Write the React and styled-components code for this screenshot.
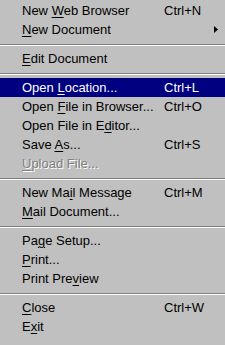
import React from "react";
import styled, { createGlobalStyle } from "styled-components";

const GlobalStyle = createGlobalStyle`
  html, body {
    margin: 0;
    padding: 0;
    background: #c0c0c0;
  }
  body {
    font-family: "Liberation Sans", Arial, sans-serif;
  }
`;

const Menu = styled.div`
  width: 225px;
  height: 345px;
  box-sizing: border-box;
  padding-top: 1px;
  background: #c0c0c0;
  display: flex;
  flex-direction: column;
  font-size: 13px;
  color: #000;
  overflow: hidden;
`;

const Row = styled.div`
  height: 19px;
  line-height: 19px;
  display: grid;
  grid-template-columns: 142px 1fr 12px;
  padding-left: 22px;
  white-space: nowrap;
  background: ${props => (props.$active ? "#000080" : "transparent")};
  color: ${props =>
    props.$disabled ? "#808080" : props.$active ? "#ffffff" : "#000000"};
  text-shadow: ${props => (props.$disabled ? "1px 1px 0 #ffffff" : "none")};
`;

const Label = styled.span``;

const Shortcut = styled.span``;

const ArrowCell = styled.span`
  display: flex;
  align-items: center;
  justify-content: flex-end;
  padding-right: 7px;
`;

const Key = styled.u`
  text-decoration: underline;
  text-decoration-thickness: 1px;
  text-underline-offset: 2px;
`;

const Separator = styled.div`
  height: 0;
  margin: 5px 0 3px;
  border-top: 1px solid #808080;
  border-bottom: 1px solid #ffffff;
`;

const Arrow = () => (
  <svg width="4" height="7" viewBox="0 0 4 7">
    <path d="M0 0 L4 3.5 L0 7 Z" fill="#000" />
  </svg>
);

const m = (text, key) => {
  const i = text.indexOf(key);
  return (
    <>
      {text.slice(0, i)}
      <Key>{key}</Key>
      {text.slice(i + key.length)}
    </>
  );
};

const groups = [
  [
    { label: m("New Web Browser", "W"), shortcut: "Ctrl+N" },
    { label: m("New Document", "N"), submenu: true },
  ],
  [{ label: m("Edit Document", "E") }],
  [
    { label: m("Open Location...", "L"), shortcut: "Ctrl+L", active: true },
    { label: m("Open File in Browser...", "F"), shortcut: "Ctrl+O" },
    { label: m("Open File in Editor...", "d") },
    { label: m("Save As...", "A"), shortcut: "Ctrl+S" },
    { label: m("Upload File...", "U"), disabled: true },
  ],
  [
    { label: m("New Mail Message", "i"), shortcut: "Ctrl+M" },
    { label: m("Mail Document...", "M") },
  ],
  [
    { label: m("Page Setup...", "g") },
    { label: m("Print...", "P") },
    { label: m("Print Preview", "v") },
  ],
  [
    { label: m("Close", "C"), shortcut: "Ctrl+W" },
    { label: m("Exit", "x") },
  ],
];

const App = () => {
  return (
    <>
      <GlobalStyle />
      <Menu>
        {groups.map((group, gi) => (
          <React.Fragment key={gi}>
            {gi > 0 && <Separator />}
            {group.map((item, ii) => (
              <Row key={ii} $active={item.active} $disabled={item.disabled}>
                <Label>{item.label}</Label>
                <Shortcut>{item.shortcut}</Shortcut>
                <ArrowCell>{item.submenu && <Arrow />}</ArrowCell>
              </Row>
            ))}
          </React.Fragment>
        ))}
      </Menu>
    </>
  );
};

export default App;
